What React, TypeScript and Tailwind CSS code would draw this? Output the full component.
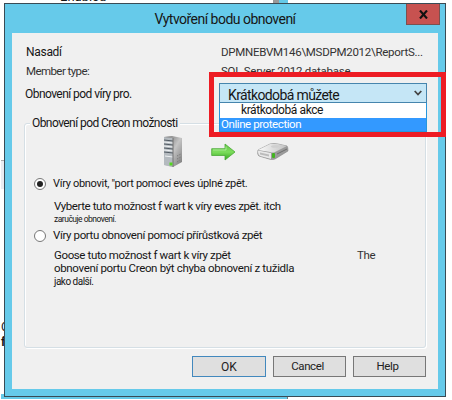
import { ReactNode } from "react";

function Line({ className, children }: { className: string; children: ReactNode }) {
  return <div className={"shrink-0 whitespace-nowrap " + className}>{children}</div>;
}

function Radio({ checked }: { checked?: boolean }) {
  return (
    <span className="flex h-3 w-3 shrink-0 items-center justify-center rounded-full border border-[#777] bg-white">
      {checked && <span className="h-1.5 w-1.5 rounded-full bg-[#222]" />}
    </span>
  );
}

function Server() {
  return (
    <svg className="h-8 w-5" viewBox="0 0 20 32">
      <defs>
        <linearGradient id="side" x1="0" x2="1" y1="0" y2="1">
          <stop offset="0" stopColor="#666" />
          <stop offset="0.5" stopColor="#c5c5c5" />
          <stop offset="1" stopColor="#777" />
        </linearGradient>
      </defs>
      <path d="M1 1L9 0L19 2V26L10 31L1 29Z" fill="url(#side)" />
      <path d="M1 1L10 2V31L1 29Z" fill="#b4babf" />
      <path d="M1 4L10 5M1 8L10 9M1 12L10 13M1 16L10 17" stroke="#525b63" />
      <path d="M1 6L10 7M1 10L10 11M1 14L10 15M2 20L10 21" stroke="#eef1f3" />
      <path d="M10 2V31" stroke="#737373" />
      <path d="M14 20L18 18M14 23L18 21M14 26L17 24" stroke="#777" strokeDasharray="1 1" />
      <rect x="6.5" y="26.5" width="3" height="3" fill="#55d51f" />
    </svg>
  );
}

function Arrow() {
  return (
    <svg className="h-[18px] w-[25px]" viewBox="0 0 25 18">
      <defs>
        <linearGradient id="green" x1="0" x2="0" y1="0" y2="1">
          <stop offset="0" stopColor="#62c746" />
          <stop offset="0.5" stopColor="#7ddd5c" />
          <stop offset="1" stopColor="#32a51d" />
        </linearGradient>
      </defs>
      <path d="M.7 5.7H14V1L24 9L14 17V12.5H.7Z" fill="url(#green)" stroke="#4aa835" strokeWidth=".8" />
      <path d="M2 7H15V3.5" fill="none" stroke="#b5efa3" strokeWidth=".8" />
    </svg>
  );
}

function Drive() {
  return (
    <svg className="h-[18px] w-8" viewBox="0 0 32 18">
      <defs>
        <linearGradient id="metal" x1="0" x2="1">
          <stop offset="0" stopColor="#fafafa" />
          <stop offset="1" stopColor="#c2c2c2" />
        </linearGradient>
      </defs>
      <path d="M1 7L13 1Q17 0 21 1L30 3Q31 4 31 8L18 16Q15 17 12 16L2 13Q0 12 1 7Z" fill="#9b9b9b" stroke="#858585" strokeWidth=".6" />
      <path d="M1 7L13 1Q17 .3 21 1L30 3L18 9Q16 10 13 9Z" fill="url(#metal)" />
      <path d="M1 7.5L14 10V16L3 13Q1 12 1 7.5Z" fill="#e8e8e8" />
      <path d="M3 9.5L12 11.5V13.5L3 11.5Z" fill="#bbb" />
      <path d="M20 11L30 6" stroke="#6d6d6d" />
      <ellipse cx="18" cy="3.5" rx="4" ry="1.3" fill="#cfcfcf" />
      <rect x="15" y="10" width="3" height="5" rx="1" fill="#42b420" />
    </svg>
  );
}

export default function App() {
  return (
    <div className="relative h-[400px] w-[452px] overflow-hidden bg-white font-['Roboto','Liberation_Sans',sans-serif] text-[11.5px] text-[#161616]">
      <div className="absolute left-[60px] top-[-10px] text-[13px] leading-[14px]">Enabled</div>
      <div className="absolute left-[273px] top-0 h-[3px] w-[15px] border-l-[6px] border-[#999] bg-[#65c9e8]" />
      <div className="absolute left-[1px] top-[160px] h-[29px] w-1 border-t border-[#aaa] bg-[#e9ecf1]" />
      <div className="absolute left-[1px] top-[320px] text-[12px] leading-[15px]">O<br /><b>f</b></div>
      <div className="absolute left-[1px] top-[394px] h-[5px] w-[287px] border-r border-[#777] bg-[#65c9e8]" />

      <div className="absolute left-1 top-[3px] flex h-[394px] w-[442px] flex-col border border-[#394b55] bg-[#66caea] px-[7px] pb-[7px]">
        <div className="relative flex h-[29px] shrink-0 items-start justify-center">
          <Line className="mt-[5px] text-[14px] leading-[20px] tracking-[-0.52px]">Vytvoření bodu obnovení</Line>
          <button className="absolute right-[-2px] top-0 flex h-[21px] w-[34px] items-center justify-center border border-t-0 border-[#7b504f] bg-[#c75250]">
            <svg className="h-[9px] w-[9px]" viewBox="0 0 9 9"><path d="M1 .5L8 8.5M8 .5L1 8.5" stroke="#111" strokeWidth="2.1" /></svg>
          </button>
        </div>
        <div className="flex h-[356px] flex-col bg-[#f0f0f0] pl-3 pr-[12px] pt-[11px]">
          <div className="flex h-5 pl-[2px] leading-[16px]">
            <Line className="w-[195px] text-[12px] tracking-[-0.3px]">Nasadí</Line>
            <Line className="tracking-[-0.27px] text-[#333]">DPMNEBVM146\MSDPM2012\ReportS...</Line>
          </div>
          <div className="flex h-[19px] pl-[2px] leading-[14px]">
            <Line className="w-[195px] tracking-[-0.58px] text-[#333]">Member type:</Line>
            <Line className="tracking-[-0.25px] text-[#333]">SQL Server 2012 database</Line>
          </div>
          <div className="flex h-[20px] pl-[1px]">
            <Line className="w-[194px] text-[12px] leading-[22px] tracking-[-0.55px]">Obnovení pod víry pro.</Line>
            <div className="flex h-[20px] w-[208px] shrink-0 items-center justify-between border border-[#4685ad] bg-[#c5e6f6] pl-[8px] pr-[4px]">
              <Line className="pt-1 text-[14px] leading-[18px] tracking-[-0.62px]">Krátkodobá můžete</Line>
              <svg className="h-[6px] w-[8px]" viewBox="0 0 8 6"><path d="M.7 1L4 4.5L7.3 1" fill="none" stroke="#444" strokeWidth="1.8" /></svg>
            </div>
          </div>
          <div className="z-10 ml-[195px] h-[29px] w-[208px] shrink-0 border border-t-0 border-[#2797dc] bg-white">
            <Line className="h-[15px] pl-[21px] text-[12px] leading-[15px] tracking-[-0.42px]">krátkodobá akce</Line>
            <Line className="h-[13px] bg-[#3399ff] pl-[1px] leading-[13px] tracking-[-0.42px] text-white">Online protection</Line>
          </div>
          <fieldset className="-mt-[17px] flex h-[233px] shrink-0 flex-col rounded-[3px] border border-[#d5dfe5] pl-[9px] shadow-[inset_1px_1px_0_#fff,1px_1px_0_#fff]">
            <legend className="-ml-[4px] h-[16px] bg-[#f0f0f0] px-[2px] text-[12px] leading-[16px]"><Line className="tracking-[-0.56px]">Obnovení pod Creon možnosti</Line></legend>
            <div className="ml-[129px] mt-[5px] flex h-8 shrink-0 items-center">
              <Server />
              <div className="ml-[28px]"><Arrow /></div>
              <div className="ml-[21px]"><Drive /></div>
            </div>
            <div className="mt-[8px] flex h-[16px] items-center gap-[7px]">
              <Radio checked />
              <Line className="text-[11px] tracking-[-0.3px]">Víry obnovit, "port pomocí eves úplné zpět.</Line>
            </div>
            <Line className="mt-[6px] pl-[20px] leading-[16px] tracking-[-0.43px]">Vyberte tuto možnost f wart k víry eves zpět. itch</Line>
            <Line className="pl-[20px] text-[8.5px] leading-[10px] tracking-[-0.5px]">zaručuje obnovení.</Line>
            <div className="mt-[4px] flex h-[16px] items-center gap-[7px]">
              <Radio />
              <Line className="tracking-[-0.38px]">Víry portu obnovení pomocí přírůstková zpět</Line>
            </div>
            <div className="mt-[4px] flex h-[14px] pl-[20px] leading-[14px]">
              <Line className="w-[303px] tracking-[-0.38px]">Goose tuto možnost f wart k víry zpět</Line>
              <Line className="tracking-[-0.4px] text-[#333]">The</Line>
            </div>
            <Line className="pl-[20px] leading-[13px] tracking-[-0.34px]">obnovení portu Creon být chyba obnovení z tužidla</Line>
            <Line className="pl-[20px] text-[10px] leading-[13px] tracking-[-0.5px]">jako další.</Line>
          </fieldset>
          <div className="mt-2 flex justify-end gap-[7px] text-[#222]">
            <button className="h-[21px] w-[74px] border border-[#4288bd] bg-[#dfdfdf] text-[12px]">OK</button>
            <button className="h-[21px] w-[73px] border border-[#777] bg-[#dfdfdf] pr-1 tracking-[-0.4px]">Cancel</button>
            <button className="h-[21px] w-[73px] border border-[#777] bg-[#dfdfdf] pr-1 tracking-[-0.4px]">Help</button>
          </div>
        </div>
      </div>
      <div className="absolute left-[209px] top-[72px] z-20 h-[65px] w-[237px] border-[5px] border-[#ed1c24]" />
    </div>
  );
}
